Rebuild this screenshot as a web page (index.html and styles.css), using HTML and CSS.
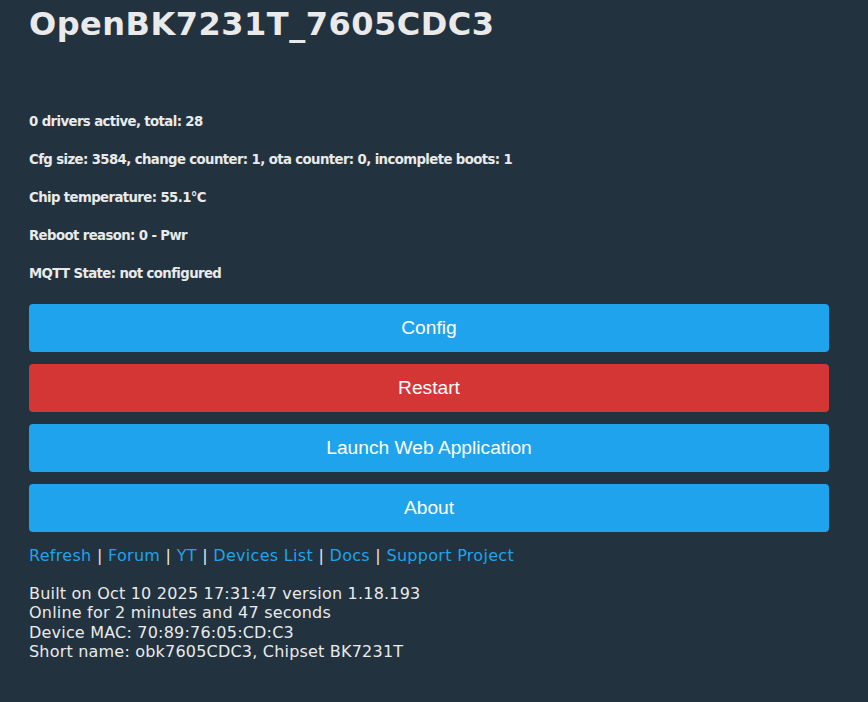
FILE: index.html
```html
<!DOCTYPE html>
<html lang="en">
<head>
  <meta charset="UTF-8">
  <title>OpenBK7231T_7605CDC3</title>
  <link rel="stylesheet" href="styles.css">
</head>
<body>
  <div class="main">
    <h1>OpenBK7231T_7605CDC3</h1>

    <div class="state">
      <h5>0 drivers active, total: 28</h5>
      <h5>Cfg size: 3584, change counter: 1, ota counter: 0, incomplete boots: 1</h5>
      <h5>Chip temperature: 55.1°C</h5>
      <h5>Reboot reason: 0 - Pwr</h5>
      <h5>MQTT State: not configured</h5>
    </div>

    <div class="actions">
      <button>Config</button>
      <button class="bred">Restart</button>
      <button>Launch Web Application</button>
      <button>About</button>
    </div>

    <div class="links">
      <a href="#">Refresh</a> | <a href="#">Forum</a> | <a href="#">YT</a> | <a href="#">Devices List</a> | <a href="#">Docs</a> | <a href="#">Support Project</a>
    </div>

    <div class="info">
      Built on Oct 10 2025 17:31:47 version 1.18.193<br>
      Online for 2 minutes and 47 seconds<br>
      Device MAC: 70:89:76:05:CD:C3<br>
      Short name: obk7605CDC3, Chipset BK7231T
    </div>
  </div>
</body>
</html>
```

FILE: styles.css
```css
body {
  margin: 0;
  background: #22323f;
  color: #eaeaea;
  font-family: Verdana, "DejaVu Sans", sans-serif;
  font-size: 16px;
  line-height: 1.215;
}
.main {
  width: 800px;
  padding-left: 29px;
}
h1 {
  font-size: 32px;
  letter-spacing: 0.5px;
  margin: 5px 0 70px;
}
.state h5 {
  font-size: 13.28px;
  letter-spacing: -0.6px;
  margin: 22px 0;
}
.state h5:last-child {
  margin-bottom: 21px;
}
.actions {
  display: flex;
  flex-direction: column;
  gap: 12.3px;
}
button {
  border: 0;
  border-radius: 4px;
  background: #1fa3ec;
  color: #fff;
  height: 48px;
  width: 100%;
  font-family: "Liberation Sans", Arial, sans-serif;
  font-size: 19.2px;
  cursor: pointer;
}
.bred {
  background: #d43535;
}
.links {
  margin-top: 13.7px;
  letter-spacing: 0.3px;
}
.links a {
  color: #1fa3ec;
  text-decoration: none;
}
.info {
  margin-top: 18.5px;
  letter-spacing: 0.2px;
}
```
